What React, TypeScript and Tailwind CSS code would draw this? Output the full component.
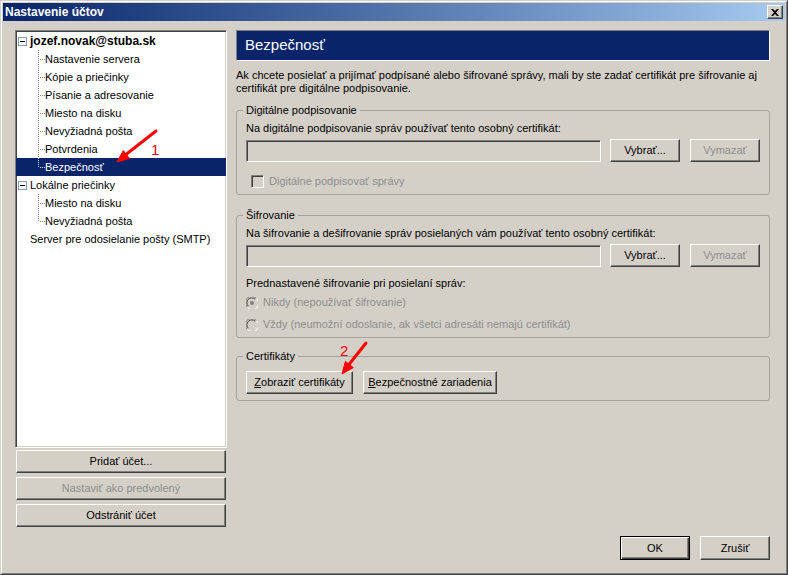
import type { ReactNode } from "react";

const raised =
  "border border-t-white border-l-white border-r-[#404040] border-b-[#404040] bg-[#d4d0c8] shadow-[inset_-1px_-1px_#808080]";
const sunken =
  "border border-t-[#808080] border-l-[#808080] border-r-white border-b-white shadow-[inset_1px_1px_#404040,inset_-1px_-1px_#d4d0c8]";

function Button({
  children,
  disabled,
  className = "",
}: {
  children: ReactNode;
  disabled?: boolean;
  className?: string;
}) {
  return (
    <button
      type="button"
      className={`${raised} flex items-center justify-center leading-[13px] ${
        disabled ? "text-[#8d8d8d]" : "text-black"
      } ${className}`}
    >
      {children}
    </button>
  );
}

function Expander() {
  return (
    <span className="flex h-[9px] w-[9px] items-center justify-center border border-[#7f9db9] bg-white">
      <span className="h-px w-[5px] bg-black" />
    </span>
  );
}

function Connector({ last, light }: { last?: boolean; light?: boolean }) {
  const dots: ReactNode[] = [];
  const end = last ? 9 : 18;
  for (let y = 0; y <= end; y += 2) dots.push(<rect key={`v${y}`} x={0} y={y} width={1} height={1} />);
  for (let x = 2; x < 7; x += 2) dots.push(<rect key={`h${x}`} x={x} y={9} width={1} height={1} />);
  return (
    <svg width="7" height="18" className={light ? "fill-[#e0e0e0]" : "fill-[#808080]"}>
      {dots}
    </svg>
  );
}

type Node = { label: string; selected?: boolean; last?: boolean };

function RootRow({ label, bold, expander = true }: { label: string; bold?: boolean; expander?: boolean }) {
  return (
    <div className={`flex h-[18px] items-center ${expander ? "pl-[2px]" : "pl-[14px]"}`}>
      {expander && <Expander />}
      <span className={`${expander ? "ml-[3px]" : ""} whitespace-nowrap ${bold ? "text-[12px] font-bold" : ""}`}>
        {label}
      </span>
    </div>
  );
}

function ChildRows({ nodes }: { nodes: Node[] }) {
  return (
    <>
      {nodes.map((n) => (
        <div
          key={n.label}
          className={`flex h-[18px] items-center pl-[22px] ${n.selected ? "bg-[#0a246a] text-white" : ""}`}
        >
          <Connector last={n.last} light={n.selected} />
          <span className="whitespace-nowrap">{n.label}</span>
        </div>
      ))}
    </>
  );
}

function Checkbox() {
  return <span className={`${sunken} h-[13px] w-[13px] bg-[#d4d0c8]`} />;
}

function Radio({ checked }: { checked?: boolean }) {
  return (
    <svg width="12" height="12" viewBox="0 0 12 12">
      <circle cx="6" cy="6" r="5.5" fill="#d4d0c8" />
      <path d="M1.2 10.2 A5.5 5.5 0 0 1 10.2 1.2" fill="none" stroke="#808080" strokeWidth="1" />
      <path d="M2.3 9.2 A4.5 4.5 0 0 1 9.2 2.3" fill="none" stroke="#404040" strokeWidth="1" />
      <path d="M10.8 1.8 A5.5 5.5 0 0 1 1.8 10.8" fill="none" stroke="#ffffff" strokeWidth="1" />
      {checked && <circle cx="6" cy="6" r="2" fill="#808080" />}
    </svg>
  );
}

function Group({ title, children, className = "" }: { title: string; children: ReactNode; className?: string }) {
  return (
    <fieldset className={`rounded-[3px] border border-[#a5a39b] px-[9px] pb-[6px] pt-[5px] ${className}`}>
      <legend className="-ml-[3px] px-[3px] leading-[13px]">{title}</legend>
      {children}
    </fieldset>
  );
}

export default function App() {
  return (
    <div className="relative h-[575px] w-[788px] border border-t-[#d4d0c8] border-l-[#d4d0c8] border-r-[#404040] border-b-[#404040] bg-[#d4d0c8] font-['Liberation_Sans',Arial,sans-serif] text-[11px] text-black">
      <div className="flex h-full flex-col border border-t-white border-l-white border-r-[#808080] border-b-[#808080] p-px">
        {/* title bar */}
        <div className="flex h-[18px] items-center justify-between bg-gradient-to-r from-[#0a246a] to-[#a6caf0] pl-[2px] pr-[2px]">
          <span className="text-[12px] font-bold text-white">Nastavenie účtov</span>
          <button type="button" className={`${raised} flex h-[14px] w-[16px] items-center justify-center`}>
            <svg width="8" height="7" viewBox="0 0 8 7">
              <path d="M0 0h2l2 2 2-2h2L5 3.5 8 7H6L4 5 2 7H0l3-3.5z" fill="#000" />
            </svg>
          </button>
        </div>

        <div className="flex flex-col pt-[9px]">
          <div className="flex h-[497px] gap-[9px] pl-[12px] pr-[15px]">
            {/* left column */}
            <div className="flex w-[212px] flex-col">
              <div className={`${sunken} h-[418px] bg-white pt-px`}>
                <RootRow label="jozef.novak@stuba.sk" bold />
                <ChildRows
                  nodes={[
                    { label: "Nastavenie servera" },
                    { label: "Kópie a priečinky" },
                    { label: "Písanie a adresovanie" },
                    { label: "Miesto na disku" },
                    { label: "Nevyžiadná pošta" },
                    { label: "Potvrdenia" },
                    { label: "Bezpečnosť", selected: true, last: true },
                  ]}
                />
                <RootRow label="Lokálne priečinky" />
                <ChildRows nodes={[{ label: "Miesto na disku" }, { label: "Nevyžiadná pošta", last: true }]} />
                <RootRow label="Server pre odosielanie pošty (SMTP)" expander={false} />
              </div>
              <div className="mx-px mt-[2px] flex flex-col gap-[4px]">
                <Button className="h-[23px]">Pridať účet...</Button>
                <Button className="h-[23px]" disabled>
                  Nastaviť ako predvolený
                </Button>
                <Button className="h-[23px]">Odstrániť účet</Button>
              </div>
            </div>

            {/* right column */}
            <div className="flex w-[534px] flex-col">
              <div className="flex h-[31px] items-center border border-t-[#808080] border-l-[#808080] border-r-white border-b-white bg-[#0a246a] pl-[8px] text-[15px] text-white">
                Bezpečnosť
              </div>
              <p className="mt-[8px] whitespace-nowrap leading-[13px]">
                Ak chcete posielať a prijímať podpísané alebo šifrované správy, mali by ste zadať certifikát pre šifrovanie aj
                <br />
                certifikát pre digitálne podpisovanie.
              </p>

              <Group title="Digitálne podpisovanie" className="mt-[9px]">
                <p className="leading-[13px]">Na digitálne podpisovanie správ používať tento osobný certifikát:</p>
                <div className="mt-[4px] flex items-start">
                  <div className={`${sunken} mt-px h-[22px] flex-1 bg-[#d4d0c8]`} />
                  <Button className="ml-[9px] h-[23px] w-[70px]">Vybrať...</Button>
                  <Button className="ml-[10px] h-[23px] w-[70px]" disabled>
                    Vymazať
                  </Button>
                </div>
                <div className="mt-[13px] flex h-[13px] items-center pl-[5px]">
                  <Checkbox />
                  <span className="ml-[5px] text-[#8d8d8d]">Digitálne podpisovať správy</span>
                </div>
              </Group>

              <Group title="Šifrovanie" className="mt-[14px]">
                <p className="leading-[13px]">Na šifrovanie a dešifrovanie správ posielaných vám používať tento osobný certifikát:</p>
                <div className="mt-[4px] flex items-start">
                  <div className={`${sunken} mt-px h-[22px] flex-1 bg-[#d4d0c8]`} />
                  <Button className="ml-[9px] h-[23px] w-[70px]">Vybrať...</Button>
                  <Button className="ml-[10px] h-[23px] w-[70px]" disabled>
                    Vymazať
                  </Button>
                </div>
                <p className="mt-[10px] leading-[13px]">Prednastavené šifrovanie pri posielaní správ:</p>
                <div className="mt-[6px] flex h-[13px] items-center">
                  <Radio checked />
                  <span className="ml-[5px] text-[#8d8d8d]">Nikdy (nepoužívať šifrovanie)</span>
                </div>
                <div className="mt-[9px] flex h-[13px] items-center">
                  <Radio />
                  <span className="ml-[5px] text-[#8d8d8d]">
                    Vždy (neumožní odoslanie, ak všetci adresáti nemajú certifikát)
                  </span>
                </div>
              </Group>

              <Group title="Certifikáty" className="mt-[12px] pt-[8px]">
                <div className="flex gap-[10px]">
                  <Button className="h-[23px] w-[107px]">
                    <u>Z</u>obraziť certifikáty
                  </Button>
                  <Button className="h-[23px] w-[134px]">
                    <u>B</u>ezpečnostné zariadenia
                  </Button>
                </div>
              </Group>
            </div>
          </div>

          {/* dialog buttons */}
          <div className="mt-[9px] flex justify-end gap-[10px] pr-[15px]">
            <button
              type="button"
              className="flex h-[24px] w-[70px] items-center justify-center border border-black bg-[#d4d0c8] leading-[13px] shadow-[inset_1px_1px_#fff,inset_-1px_-1px_#404040,inset_-2px_-2px_#808080]"
            >
              OK
            </button>
            <Button className="h-[24px] w-[70px]">Zrušiť</Button>
          </div>
        </div>
      </div>

      {/* annotation arrows */}
      <svg className="pointer-events-none absolute -left-px -top-px" width="788" height="575">
        <g fill="#ff0000" stroke="#ff0000">
          <line x1="156" y1="131" x2="126" y2="154.5" strokeWidth="3" strokeLinecap="round" />
          <polygon points="117,162 129.5,158.4 123.3,150.6" strokeWidth="1" strokeLinejoin="round" />
          <line x1="366" y1="343" x2="349" y2="364.5" strokeWidth="3" strokeLinecap="round" />
          <polygon points="342,374 353.3,367.6 345.4,361.4" strokeWidth="1" strokeLinejoin="round" />
        </g>
        <text x="151" y="155" fill="#ff0000" stroke="none" fontSize="15" fontFamily="Liberation Sans, Arial, sans-serif">
          1
        </text>
        <text x="340" y="356" fill="#ff0000" stroke="none" fontSize="15" fontFamily="Liberation Sans, Arial, sans-serif">
          2
        </text>
      </svg>
    </div>
  );
}
